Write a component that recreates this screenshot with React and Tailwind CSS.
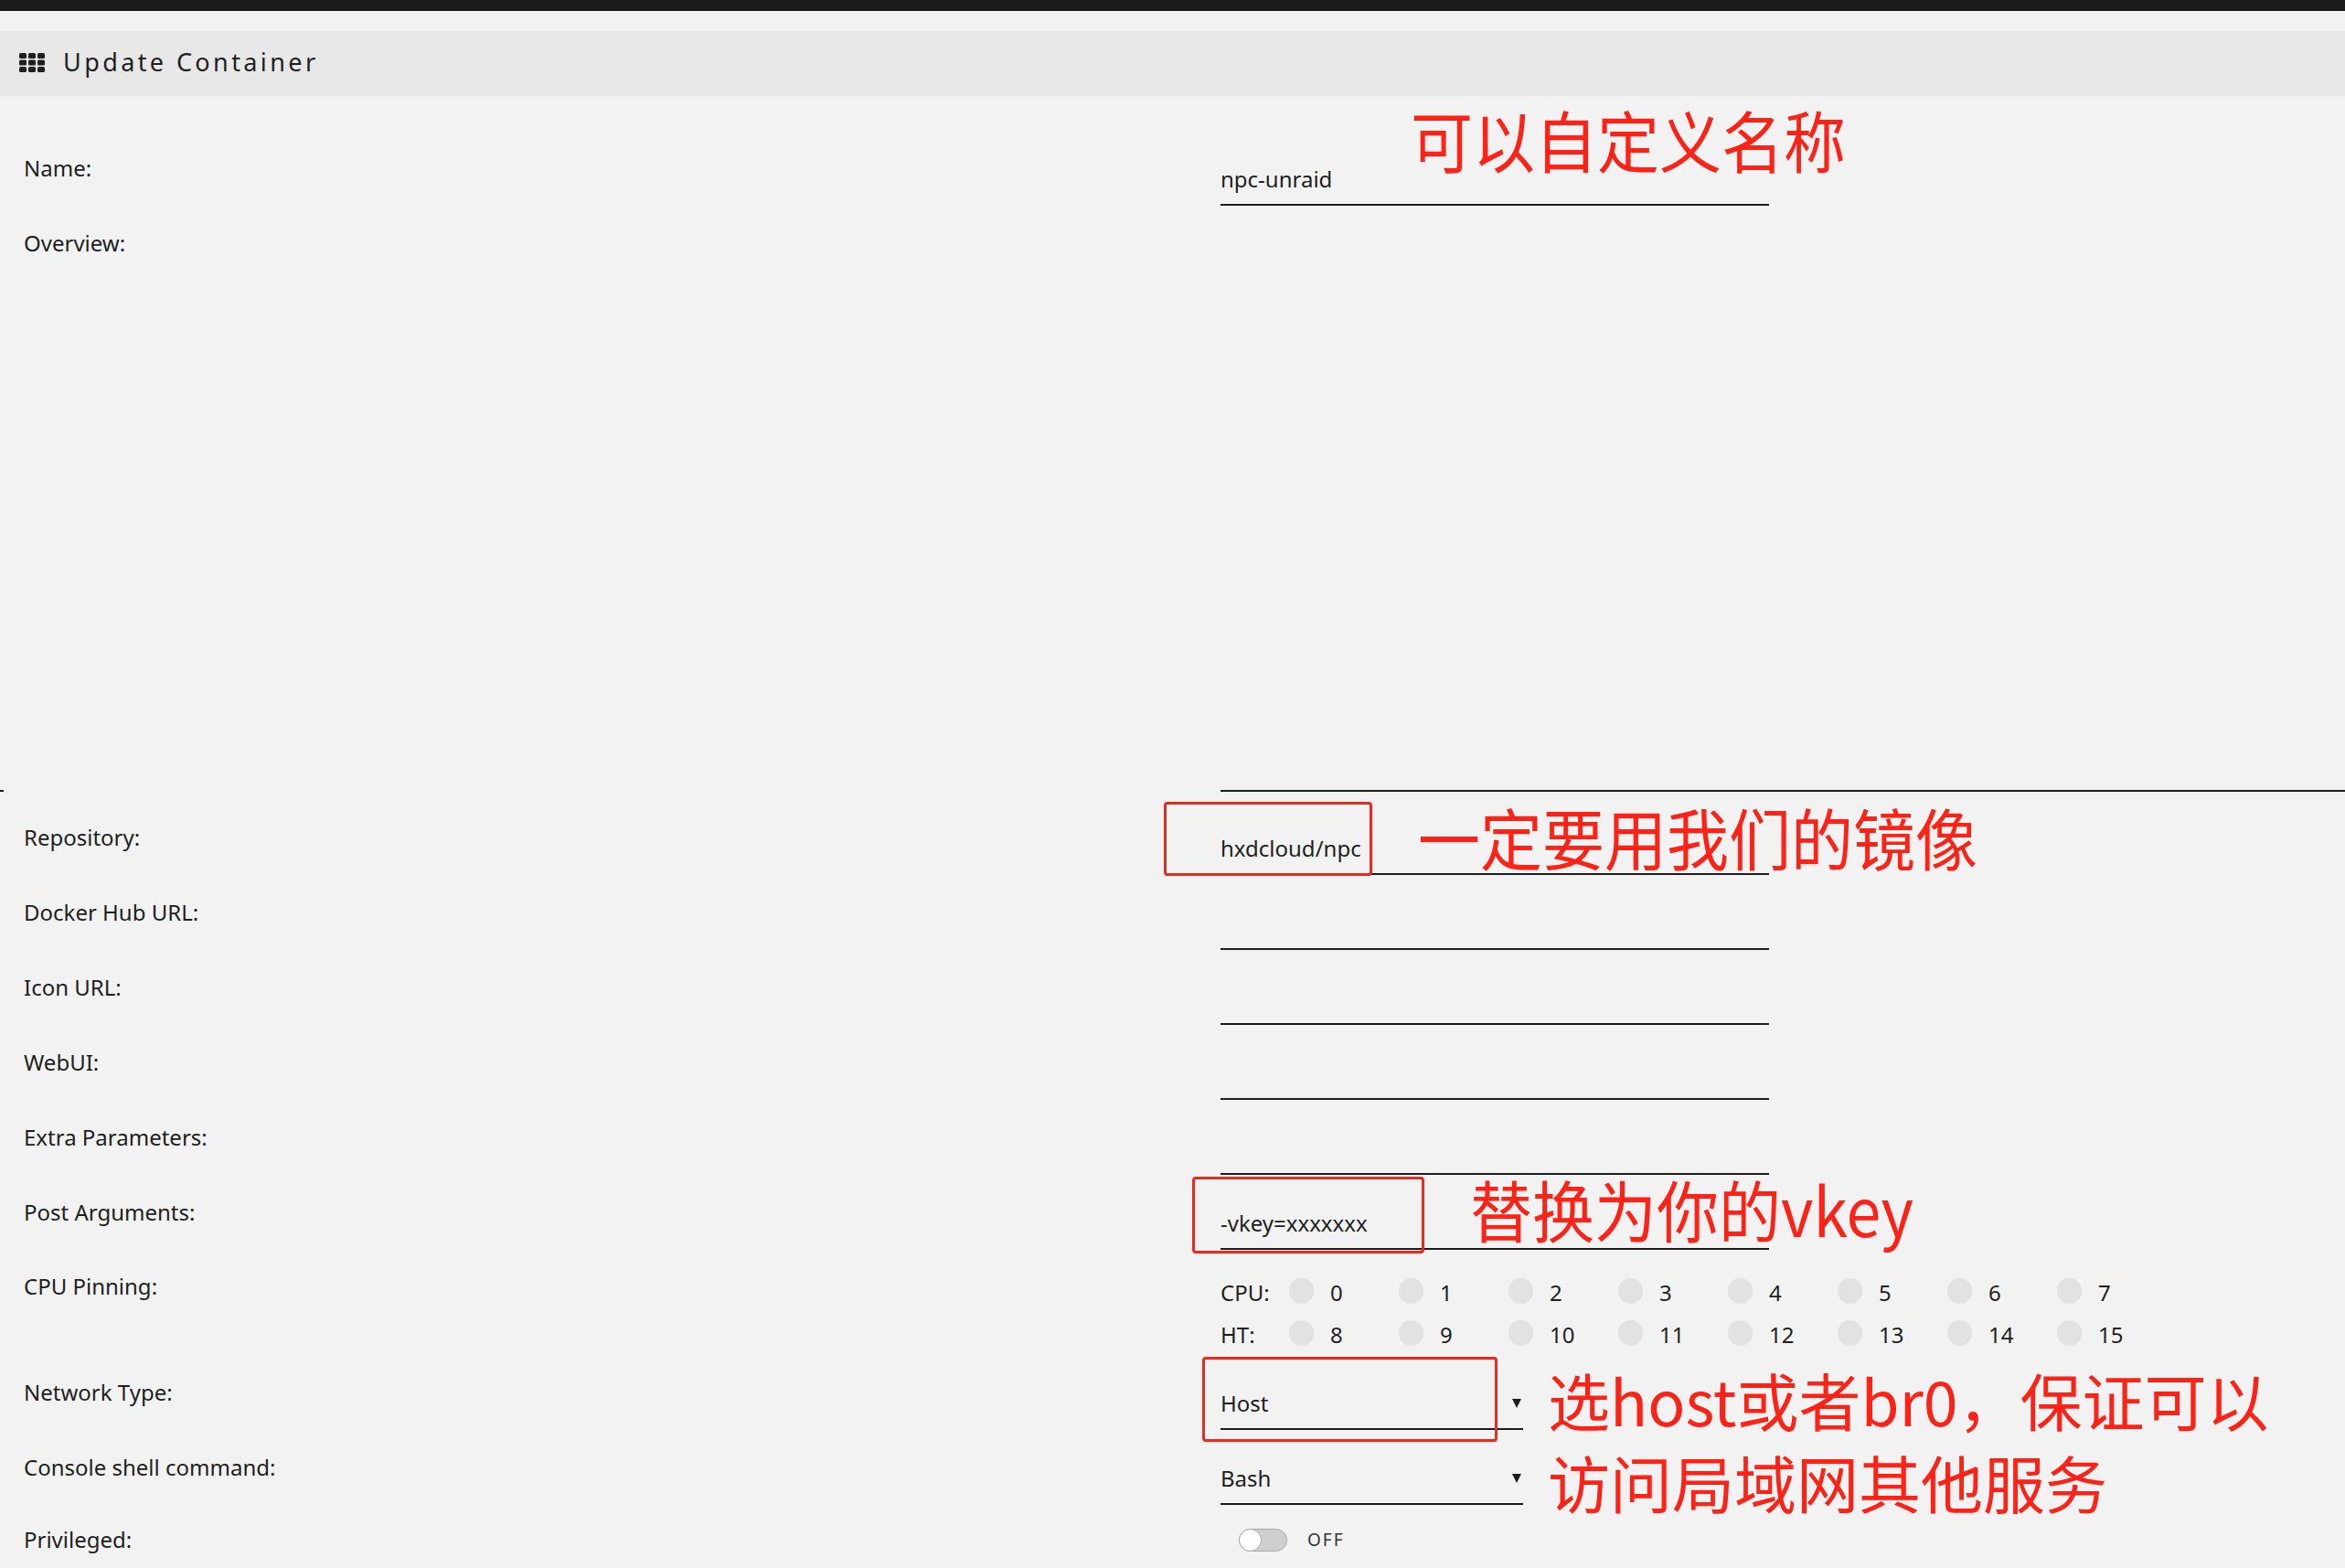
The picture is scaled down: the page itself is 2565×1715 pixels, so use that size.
import React from 'react';

function GridIcon() {
  const cells = [];
  for (let r = 0; r < 3; r++) {
    for (let c = 0; c < 3; c++) {
      cells.push(<rect key={`${r}-${c}`} x={c * 10} y={r * 7.5} width="8" height="6" rx="1.6" fill="#1f1f1f" />);
    }
  }
  return (
    <svg width="28" height="21" viewBox="0 0 28 21">
      {cells}
    </svg>
  );
}

function Arrow() {
  return (
    <svg width="10" height="11" viewBox="0 0 10 11" className="mb-[4px]">
      <path d="M0 1 L10 1 L5 11 Z" fill="#1c1c1c" />
    </svg>
  );
}

function Label({ children, pt = 'pt-[9px]' }) {
  return <div className={`w-[1335px] shrink-0 pl-[26px] ${pt}`}>{children}</div>;
}

function TextField({ label, value }) {
  return (
    <div className="flex h-[82px]">
      <Label>{label}</Label>
      <div className="mt-[21px] h-[45px] w-[600px] border-b-2 border-[#1c1c1c] flex items-start">
        {value && <span className="whitespace-nowrap">{value}</span>}
      </div>
    </div>
  );
}

function SelectField({ label, value }) {
  return (
    <div className="flex h-[82px]">
      <Label>{label}</Label>
      <div className="mt-[21px] h-[45px] w-[331px] border-b-2 border-[#1c1c1c] flex justify-between items-start">
        <span>{value}</span>
        <span className="pt-[10px] pr-[2px]"><Arrow /></span>
      </div>
    </div>
  );
}

function CpuRow({ title, nums }) {
  return (
    <div className="flex h-[46px] items-center">
      <div className="w-[75px] shrink-0 pt-[3px]">{title}</div>
      {nums.map((n) => (
        <div key={n} className="w-[120px] shrink-0 flex items-center">
          <div className="w-[27px] h-[28px] rounded-full bg-[#e2e2e2]" />
          <span className="ml-[18px] pt-[3px]">{n}</span>
        </div>
      ))}
    </div>
  );
}

const note = "absolute font-['Noto_Sans_CJK_SC',sans-serif] text-[68px] leading-none text-[#ff2217] whitespace-nowrap scale-y-[1.07] origin-center";
const noteBlock = "absolute font-['Noto_Sans_CJK_SC',sans-serif] text-[68px] leading-[90px] text-[#ff2217] whitespace-nowrap";
const box = 'absolute border-[3px] border-[#e82a20] rounded-[4px]';

export default function App() {
  return (
    <div className="relative w-full min-h-screen bg-[#f2f2f2] font-['Noto_Sans','Noto_Sans_CJK_SC',sans-serif] text-[24px] leading-[32px] text-[#1e1e1e] overflow-hidden">
      <div className="h-[12px] bg-[#1c1b1b]" />
      <div className="h-[22px]" />
      <div className="h-[72px] bg-[#e8e8e8] border-b-2 border-[#ededed] flex items-center pl-[21px] pb-[2px]">
        <GridIcon />
        <span className="ml-[20px] text-[27px] tracking-[3.4px] text-[#1f1f1f]">Update Container</span>
      </div>

      <div className="pt-[53px]">
        <TextField label="Name:" value="npc-unraid" />

        <div className="relative flex h-[650px]">
          <Label>Overview:</Label>
          <div className="flex-1 h-[625px] border-b-2 border-[#1c1c1c]" />
          <div className="absolute left-0 top-[623px] w-[4px] h-[2px] bg-[#1c1c1c]" />
        </div>

        <TextField label="Repository:" value="hxdcloud/npc" />
        <TextField label="Docker Hub URL:" value="" />
        <TextField label="Icon URL:" value="" />
        <TextField label="WebUI:" value="" />
        <TextField label="Extra Parameters:" value="" />
        <TextField label="Post Arguments:" value="-vkey=xxxxxxx" />

        <div className="flex h-[115px]">
          <Label pt="pt-[8px]">CPU Pinning:</Label>
          <div className="pt-[6px]">
            <CpuRow title="CPU:" nums={[0, 1, 2, 3, 4, 5, 6, 7]} />
            <CpuRow title="HT:" nums={[8, 9, 10, 11, 12, 13, 14, 15]} />
          </div>
        </div>

        <SelectField label="Network Type:" value="Host" />
        <SelectField label="Console shell command:" value="Bash" />

        <div className="flex h-[52px]">
          <Label pt="pt-[6px]">Privileged:</Label>
          <div className="flex items-center h-[44px] ml-[20px]">
            <div className="w-[53px] h-[25px] rounded-full bg-[#cfcfcf] border border-[#a9a9a9] flex items-center">
              <div className="w-[25px] h-[25px] rounded-full bg-white border border-[#a9a9a9] -ml-px" />
            </div>
            <span className="ml-[22px] text-[19px] tracking-[2px] text-[#333]">OFF</span>
          </div>
        </div>
      </div>

      <div className={`${note} left-[1543px] top-[118px]`}>可以自定义名称</div>
      <div className={`${note} left-[1551px] top-[881px]`}>一定要用我们的镜像</div>
      <div className={`${note} left-[1608px] top-[1288px]`}>替换为你的vkey</div>
      <div className={`${noteBlock} left-[1693px] top-[1486px]`}>
        选host或者br0，保证可以<br />访问局域网其他服务
      </div>

      <div className={`${box} left-[1273px] top-[877px] w-[228px] h-[81px]`} />
      <div className={`${box} left-[1304px] top-[1287px] w-[254px] h-[84px]`} />
      <div className={`${box} left-[1315px] top-[1484px] w-[323px] h-[93px]`} />
    </div>
  );
}
